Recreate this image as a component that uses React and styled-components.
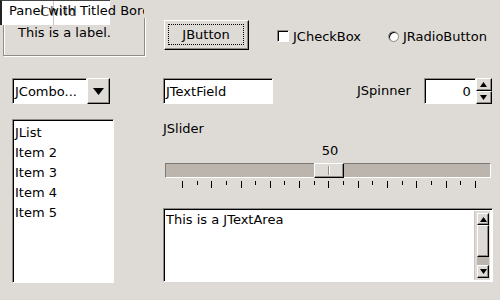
import React from 'react';
import styled, { createGlobalStyle } from 'styled-components';

const BG = '#dedbd6';
const SHADOW = '#8f8c87';
const TROUGH = '#bcb5ad';

const GlobalStyle = createGlobalStyle`
  html, body {
    margin: 0;
    padding: 0;
    background: ${BG};
  }
  body {
    font-family: "DejaVu Sans", "Liberation Sans", sans-serif;
    font-size: 13px;
    color: #000;
  }
`;

const Page = styled.div`
  width: 500px;
  height: 300px;
  overflow: hidden;
  display: flex;
  flex-direction: column;
  line-height: 15px;
`;

const TopRow = styled.div`
  display: flex;
  align-items: flex-start;
  height: 58px;
`;

const Row = styled.div`
  display: flex;
  align-items: flex-start;
  padding-left: 12px;
  margin-top: ${({ $top }) => $top}px;
`;

/* titled-border panel, with the repaint glitch at its top-left corner */
const Panel = styled.div`
  position: relative;
  width: 148px;
  height: 58px;
`;

const EtchedBox = styled.div`
  margin: 8px 0 0 3px;
  box-sizing: border-box;
  width: 142px;
  height: 48px;
  border: 1px solid ${SHADOW};
  box-shadow: 1px 1px 0 #fff, inset 1px 1px 0 #fff;
  padding: 16px 0 0 14px;
`;

const TitleStrip = styled.div`
  position: absolute;
  left: 9px;
  top: 0;
  width: 137px;
  height: 18px;
  background: ${BG};
`;

const GlitchBox = styled.div`
  position: absolute;
  left: 0;
  top: 0;
  width: 108px;
  height: 24px;
  background: #fff;
  border-top: 1px solid #444;
  border-left: 2px solid #222;
  overflow: hidden;
`;

const GlitchDivider = styled.div`
  position: absolute;
  left: 51px;
  top: 0;
  width: 1px;
  height: 100%;
  background: #c9c6c1;
`;

const GhostText = styled.span`
  position: absolute;
  left: 38px;
  top: 3px;
  color: #555;
  letter-spacing: 1px;
`;

const CornerLine = styled.div`
  position: absolute;
  left: 3px;
  top: 8px;
  width: 5px;
  height: 17px;
  border-top: 1px solid ${SHADOW};
  border-left: 1px solid ${SHADOW};
`;

const Title = styled.div`
  position: absolute;
  left: 9px;
  top: 3px;
  width: 135px;
  white-space: nowrap;
  overflow: hidden;
`;

const RaisedButton = styled.div`
  box-sizing: border-box;
  display: flex;
  align-items: center;
  justify-content: center;
  background: ${BG};
  border-style: solid;
  border-width: 1px;
  border-color: #fff #000 #000 #fff;
  box-shadow: inset -1px -1px 0 ${SHADOW};
`;

const PushButton = styled(RaisedButton)`
  margin: 20px 0 0 16px;
  width: 85px;
  height: 30px;
  padding: 3px 4px 4px 3px;
`;

const Focus = styled.div`
  flex: 1;
  align-self: stretch;
  display: flex;
  align-items: center;
  justify-content: center;
  border: 1px dotted #000;
`;

const Toggle = styled.label`
  display: flex;
  align-items: center;
  gap: 4px;
  height: 30px;
  margin: 21px 0 0 ${({ $gap }) => $gap}px;
`;

const CheckBox = styled.span`
  box-sizing: border-box;
  width: 12px;
  height: 12px;
  background: #fff;
  border-style: solid;
  border-width: 1px;
  border-color: ${SHADOW} #fff #fff ${SHADOW};
  box-shadow: inset 1px 1px 0 #000;
`;

const Radio = styled.span`
  box-sizing: border-box;
  width: 11px;
  height: 11px;
  border-radius: 50%;
  background: #fff;
  border: 1px solid ${SHADOW};
  box-shadow: inset 1px 1px 0 #000;
`;

const Sunken = styled.div`
  box-sizing: border-box;
  background: #fff;
  border-style: solid;
  border-width: 1px;
  border-color: ${SHADOW} #fff #fff ${SHADOW};
  box-shadow: inset 1px 1px 0 #000;
`;

const Field = styled(Sunken)`
  width: ${({ $w }) => $w}px;
  height: 26px;
  display: flex;
  align-items: center;
  justify-content: ${({ $right }) => ($right ? 'flex-end' : 'flex-start')};
  padding: 1px 4px 0 2px;
  margin-left: ${({ $ml }) => $ml || 0}px;
  white-space: nowrap;
  overflow: hidden;
`;

const ArrowButton = styled(RaisedButton)`
  width: 23px;
  height: 26px;
`;

const SpinLabel = styled.span`
  margin: 5px 13px 0 84px;
`;

const SpinButtons = styled.div`
  display: flex;
  flex-direction: column;
`;

const SpinButton = styled(RaisedButton)`
  width: 16px;
  height: 13px;
`;

const List = styled(Sunken)`
  width: 102px;
  height: 164px;
  padding: 3px 0 0 2px;
`;

const ListItem = styled.div`
  line-height: 20px;
`;

const RightColumn = styled.div`
  margin-left: 49px;
  width: 330px;
  display: flex;
  flex-direction: column;
`;

const SliderLabel = styled.div`
  margin-top: 2px;
`;

const SliderValue = styled.div`
  margin: 7px 0 0 2px;
  text-align: center;
  width: 330px;
`;

const Track = styled.div`
  position: relative;
  box-sizing: border-box;
  margin: 5px 0 0 2px;
  width: 326px;
  height: 15px;
  background: ${TROUGH};
  border-style: solid;
  border-width: 1px;
  border-color: #7d7a75 #fff #fff #7d7a75;
`;

const Thumb = styled(RaisedButton)`
  position: absolute;
  top: -1px;
  width: 30px;
  height: 15px;
  &::after {
    content: '';
    width: 1px;
    height: 9px;
    background: ${SHADOW};
    box-shadow: 1px 0 0 #fff;
  }
`;

const Ticks = styled.div`
  display: flex;
  justify-content: space-between;
  align-items: flex-start;
  margin: 3px 0 0 19px;
  width: 294px;
  height: 7px;
`;

const Tick = styled.span`
  width: 1px;
  height: ${({ $major }) => ($major ? 7 : 4)}px;
  background: #000;
`;

const TextArea = styled(Sunken)`
  margin-top: 20px;
  width: 330px;
  height: 74px;
  display: flex;
  padding: 2px 2px 1px 2px;
`;

const AreaText = styled.div`
  flex: 1;
  padding-top: 1px;
`;

const ScrollBar = styled.div`
  width: 16px;
  display: flex;
  flex-direction: column;
  padding: 2px 1px 2px 2px;
  box-sizing: border-box;
  border-left: 1px solid #c9c6c1;
  background: ${BG};
`;

const ScrollButton = styled(RaisedButton)`
  height: ${({ $h }) => $h}px;
  flex: none;
`;

const ScrollThumb = styled(RaisedButton)`
  height: 32px;
  flex: none;
`;

const ScrollTrack = styled.div`
  flex: 1;
  background: ${TROUGH};
`;

function Arrow({ down, size = 7 }) {
  const h = Math.ceil(size / 2) + 1;
  return (
    <svg width={size} height={h} viewBox={`0 0 ${size} ${h}`}>
      <polygon
        points={down ? `0,0 ${size},0 ${size / 2},${h}` : `0,${h} ${size},${h} ${size / 2},0`}
        fill="#000"
      />
    </svg>
  );
}

const tickCount = 21;
const value = 50;

export default function App() {
  return (
    <>
      <GlobalStyle />
      <Page>
        <TopRow>
          <Panel>
            <EtchedBox>This is a label.</EtchedBox>
            <CornerLine />
            <TitleStrip />
            <GlitchBox>
              <GlitchDivider />
              <GhostText>Child</GhostText>
            </GlitchBox>
            <Title>Panel with Titled Border</Title>
          </Panel>
          <PushButton>
            <Focus>JButton</Focus>
          </PushButton>
          <Toggle $gap={28}>
            <CheckBox />
            JCheckBox
          </Toggle>
          <Toggle $gap={27}>
            <Radio />
            JRadioButton
          </Toggle>
        </TopRow>

        <Row $top={20}>
          <Field $w={75}>JCombo...</Field>
          <ArrowButton>
            <Arrow down size={11} />
          </ArrowButton>
          <Field $w={110} $ml={53}>JTextField</Field>
          <SpinLabel>JSpinner</SpinLabel>
          <Field $w={52} $right>0</Field>
          <SpinButtons>
            <SpinButton><Arrow size={7} /></SpinButton>
            <SpinButton><Arrow down size={7} /></SpinButton>
          </SpinButtons>
        </Row>

        <Row $top={15}>
          <List>
            {['JList', 'Item 2', 'Item 3', 'Item 4', 'Item 5'].map((item) => (
              <ListItem key={item}>{item}</ListItem>
            ))}
          </List>
          <RightColumn>
            <SliderLabel>JSlider</SliderLabel>
            <SliderValue>{value}</SliderValue>
            <Track>
              <Thumb style={{ left: 16 + (value / 100) * 293 - 15 }} />
            </Track>
            <Ticks>
              {Array.from({ length: tickCount }, (_, i) => (
                <Tick key={i} $major={i % 2 === 0} />
              ))}
            </Ticks>
            <TextArea>
              <AreaText>This is a JTextArea</AreaText>
              <ScrollBar>
                <ScrollButton $h={12}><Arrow size={7} /></ScrollButton>
                <ScrollThumb />
                <ScrollTrack />
                <ScrollButton $h={13}><Arrow down size={7} /></ScrollButton>
              </ScrollBar>
            </TextArea>
          </RightColumn>
        </Row>
      </Page>
    </>
  );
}
